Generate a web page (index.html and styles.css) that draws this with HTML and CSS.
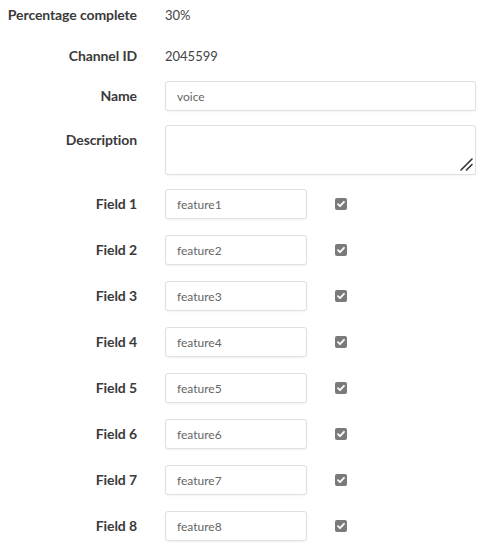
FILE: index.html
```html
<!DOCTYPE html>
<html lang="en">
<head>
<meta charset="utf-8">
<title>Channel settings</title>
<link rel="stylesheet" href="styles.css">
</head>
<body>
<form class="form">
  <div class="row row-text r1">
    <span class="label">Percentage complete</span>
    <span class="value">30%</span>
  </div>
  <div class="row row-text r2">
    <span class="label">Channel ID</span>
    <span class="value">2045599</span>
  </div>
  <div class="row r3">
    <label class="label">Name</label>
    <input class="input wide" type="text" value="voice">
  </div>
  <div class="row r4">
    <label class="label">Description</label>
    <div class="ta-wrap">
      <textarea class="input textarea"></textarea>
      <svg class="grip" width="13" height="13" viewBox="0 0 13 13"><path d="M1 12 L12 1 M6.5 12 L12 6.5" stroke="#333" stroke-width="1.6" stroke-linecap="round" fill="none"/></svg>
    </div>
  </div>
  <div class="row field"><label class="label">Field 1</label><input class="input narrow" type="text" value="feature1"><span class="check"><svg width="12" height="12" viewBox="0 0 12 12"><path d="M3 6.2 L5 8.2 L9 3.8" stroke="#fff" stroke-width="1.8" fill="none" stroke-linecap="round" stroke-linejoin="round"/></svg></span></div>
  <div class="row field"><label class="label">Field 2</label><input class="input narrow" type="text" value="feature2"><span class="check"><svg width="12" height="12" viewBox="0 0 12 12"><path d="M3 6.2 L5 8.2 L9 3.8" stroke="#fff" stroke-width="1.8" fill="none" stroke-linecap="round" stroke-linejoin="round"/></svg></span></div>
  <div class="row field"><label class="label">Field 3</label><input class="input narrow" type="text" value="feature3"><span class="check"><svg width="12" height="12" viewBox="0 0 12 12"><path d="M3 6.2 L5 8.2 L9 3.8" stroke="#fff" stroke-width="1.8" fill="none" stroke-linecap="round" stroke-linejoin="round"/></svg></span></div>
  <div class="row field"><label class="label">Field 4</label><input class="input narrow" type="text" value="feature4"><span class="check"><svg width="12" height="12" viewBox="0 0 12 12"><path d="M3 6.2 L5 8.2 L9 3.8" stroke="#fff" stroke-width="1.8" fill="none" stroke-linecap="round" stroke-linejoin="round"/></svg></span></div>
  <div class="row field"><label class="label">Field 5</label><input class="input narrow" type="text" value="feature5"><span class="check"><svg width="12" height="12" viewBox="0 0 12 12"><path d="M3 6.2 L5 8.2 L9 3.8" stroke="#fff" stroke-width="1.8" fill="none" stroke-linecap="round" stroke-linejoin="round"/></svg></span></div>
  <div class="row field"><label class="label">Field 6</label><input class="input narrow" type="text" value="feature6"><span class="check"><svg width="12" height="12" viewBox="0 0 12 12"><path d="M3 6.2 L5 8.2 L9 3.8" stroke="#fff" stroke-width="1.8" fill="none" stroke-linecap="round" stroke-linejoin="round"/></svg></span></div>
  <div class="row field"><label class="label">Field 7</label><input class="input narrow" type="text" value="feature7"><span class="check"><svg width="12" height="12" viewBox="0 0 12 12"><path d="M3 6.2 L5 8.2 L9 3.8" stroke="#fff" stroke-width="1.8" fill="none" stroke-linecap="round" stroke-linejoin="round"/></svg></span></div>
  <div class="row field"><label class="label">Field 8</label><input class="input narrow" type="text" value="feature8"><span class="check"><svg width="12" height="12" viewBox="0 0 12 12"><path d="M3 6.2 L5 8.2 L9 3.8" stroke="#fff" stroke-width="1.8" fill="none" stroke-linecap="round" stroke-linejoin="round"/></svg></span></div>
</form>
</body>
</html>
```
FILE: styles.css
```css
html, body {
  margin: 0;
  padding: 0;
  background: #fff;
}
body {
  font-family: "Lato", "Open Sans", sans-serif;
  color: #333;
}
.form {
  display: flex;
  flex-direction: column;
}
.row {
  display: flex;
  align-items: flex-start;
  gap: 28px;
}
.label {
  width: 137px;
  flex: none;
  text-align: right;
  font-size: 14px;
  font-weight: 700;
  color: #3a3a3a;
  line-height: 30px;
  white-space: nowrap;
  letter-spacing: -0.1px;
}
.value {
  font-size: 13px;
  line-height: 30px;
  color: #444;
}
.r1 { margin-bottom: 11px; }
.r2 { margin-bottom: 10px; }
.r3 { margin-bottom: 14px; }
.r4 { margin-bottom: 14px; }
.field { margin-bottom: 16px; align-items: center; }
.input {
  box-sizing: border-box;
  height: 30px;
  border: 1px solid #e0e0e0;
  border-radius: 3px;
  box-shadow: 0 1px 2px rgba(0,0,0,0.06);
  background: #fff;
  font-family: "Lato", "Open Sans", sans-serif;
  font-size: 12px;
  color: #666;
  padding: 0 11px;
  margin: 0;
  outline: none;
}
.wide { width: 311px; }
.narrow { width: 142px; }
.ta-wrap {
  position: relative;
  width: 311px;
  height: 50px;
}
.textarea {
  width: 311px;
  height: 50px;
  resize: none;
  display: block;
}
.grip {
  position: absolute;
  right: 3px;
  bottom: 4px;
}
.check {
  width: 12px;
  height: 12px;
  border-radius: 2px;
  background: #7a7a7a;
  display: flex;
  margin-left: 0;
}
.check svg { display: block; }
```
